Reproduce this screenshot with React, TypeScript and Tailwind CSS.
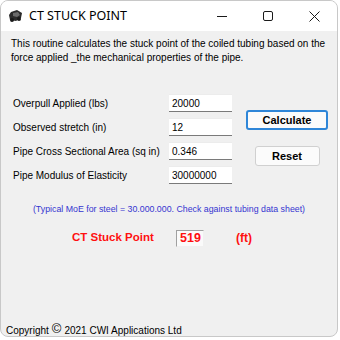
import React from 'react'

const rows = [
  { label: 'Overpull Applied (lbs)', value: '20000' },
  { label: 'Observed stretch (in)', value: '12' },
  { label: 'Pipe Cross Sectional Area (sq in)', value: '0.346' },
  { label: 'Pipe Modulus of Elasticity', value: '30000000' },
]

const AppIcon = () => (
  <svg width="15" height="14" viewBox="0 0 15 14">
    <path d="M3 3 L9 1 L14 4 L13 9 L8 12 L2 11 L1 6 Z" fill="#2b2b2b" />
    <path d="M5 4 L10 3 L12 6 L9 8 L5 7 Z" fill="#6b6b6b" />
    <circle cx="4" cy="11" r="2" fill="#1a1a1a" />
    <circle cx="11" cy="10" r="2" fill="#1a1a1a" />
  </svg>
)

export default function App() {
  return (
    <div className="w-[340px] h-[340px] bg-white font-['Liberation_Sans',Arial,sans-serif]">
      <div className="w-[338px] h-[337px] rounded-lg border border-[#c8c8c8] bg-[#f0f0f0] overflow-hidden flex flex-col">
        {/* title bar */}
        <div className="h-[30px] bg-white flex items-center shrink-0">
          <div className="ml-[7px] mr-[6px] flex items-center"><AppIcon /></div>
          <span className="text-[12.5px] text-black font-['Noto_Sans',sans-serif]">CT STUCK POINT</span>
          <div className="ml-auto flex items-center h-full">
            <div className="w-[46px] h-full flex items-center justify-center">
              <div className="w-[10px] h-px bg-[#1a1a1a]" />
            </div>
            <div className="w-[46px] h-full flex items-center justify-center">
              <div className="w-[10px] h-[10px] border border-[#1a1a1a] rounded-[2px]" />
            </div>
            <div className="w-[46px] h-full flex items-center justify-center">
              <svg width="11" height="11" viewBox="0 0 11 11">
                <path d="M0.5 0.5 L10.5 10.5 M10.5 0.5 L0.5 10.5" stroke="#1a1a1a" strokeWidth="1" />
              </svg>
            </div>
          </div>
        </div>

        {/* body */}
        <div className="flex-1 flex flex-col text-[10px] text-black">
          <p className="mt-[6px] px-[10px] leading-[14px]">
            This routine calculates the stuck point of the coiled tubing based on the force applied _the mechanical properties of the pipe.
          </p>

          <div className="mt-[29px] flex">
            <div className="w-[168px] pl-[12px] flex flex-col gap-[6px]">
              {rows.map((r) => (
                <div key={r.label} className="h-[18px] flex items-center">{r.label}</div>
              ))}
            </div>
            <div className="w-[63px] flex flex-col gap-[6px]">
              {rows.map((r) => (
                <div
                  key={r.label}
                  className="h-[18px] bg-white border-b border-b-[#7a7a7a] border-t border-t-[#ececec] flex items-center px-[3px] text-[10px]"
                >
                  {r.value}
                </div>
              ))}
            </div>
            <div className="ml-[14px] w-[82px] flex flex-col items-center">
              <button className="mt-[16px] w-[82px] h-[20px] rounded-[3px] border-2 border-[#2f86d8] bg-[#fbfbfb] text-[11px] font-bold leading-none">
                Calculate
              </button>
              <button className="mt-[16px] w-[65px] h-[20px] rounded-[3px] border border-[#d0d0d0] bg-[#fbfbfb] text-[11px] font-bold leading-none">
                Reset
              </button>
            </div>
          </div>

          <p className="mt-[19px] text-center text-[8.8px] leading-[12px] text-[#3535d0]">
            (Typical MoE for steel = 30.000.000. Check against tubing data sheet)
          </p>

          <div className="mt-[14px] flex items-center font-bold text-[#ff1010]">
            <span className="ml-[71px] w-[104px] text-[11.5px]">CT Stuck Point</span>
            <span className="w-[28px] h-[17px] bg-[#fafafa] border border-t-[#a0a0a0] border-l-[#a0a0a0] border-r-[#f0f0f0] border-b-[#f0f0f0] flex items-center pl-[3px] leading-none text-[12.5px]">
              519
            </span>
            <span className="ml-[32px] text-[12px]">(ft)</span>
          </div>

          <div className="mt-auto pl-[5px] flex items-center h-[12px]">
            Copyright <span className="text-[13px] mx-[3px] leading-none -mt-[3px]">©</span> 2021 CWI Applications Ltd
          </div>
        </div>
      </div>
    </div>
  )
}
